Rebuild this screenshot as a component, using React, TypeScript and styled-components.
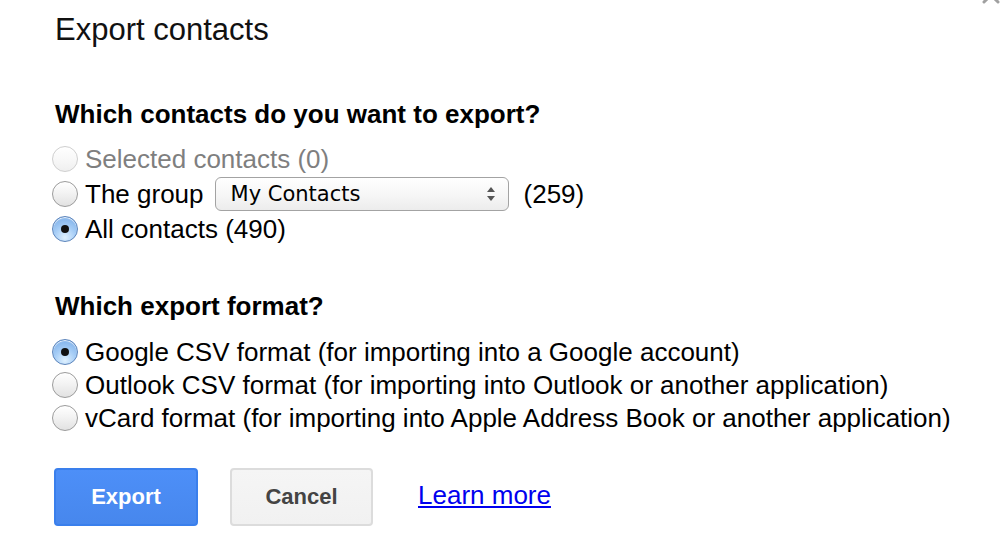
import React from "react";
import styled, { createGlobalStyle, css } from "styled-components";

const GlobalStyle = createGlobalStyle`
  html, body {
    margin: 0;
    padding: 0;
    background: #ffffff;
  }
  body {
    font-family: "Liberation Sans", Arial, sans-serif;
    color: #000;
    overflow: hidden;
  }
`;

const Page = styled.div`
  position: relative;
  width: 1004px;
  height: 554px;
  padding-left: 55px;
  box-sizing: border-box;
  overflow: hidden;
`;

const CloseIcon = styled.svg`
  position: absolute;
  top: -14px;
  right: 4px;
`;

const Title = styled.h1`
  margin: 12px 0 0 0;
  font-size: 31px;
  line-height: 36px;
  font-weight: normal;
  color: #111;
`;

const Heading = styled.h2<{ $top: number; $bottom: number }>`
  margin: ${(p) => p.$top}px 0 ${(p) => p.$bottom}px 0;
  font-size: 26px;
  line-height: 30px;
  font-weight: bold;
  color: #000;
`;

const Options = styled.div`
  display: flex;
  flex-direction: column;
`;

const Row = styled.label<{ $disabled?: boolean; $h?: number }>`
  display: flex;
  align-items: center;
  height: ${(p) => p.$h ?? 34}px;
  font-size: 26px;
  line-height: 34px;
  color: ${(p) => (p.$disabled ? "#7f7f7f" : "#000")};
  white-space: nowrap;
`;

const Radio = styled.span<{ $checked?: boolean; $disabled?: boolean }>`
  position: relative;
  flex: none;
  width: 26px;
  height: 26px;
  margin-left: -3px;
  margin-right: 7px;
  border-radius: 50%;
  box-sizing: border-box;
  border: 1.5px solid #9b9b9b;
  background: linear-gradient(#ffffff 0%, #f3f3f3 45%, #e2e2e2 100%);
  box-shadow: inset 0 1px 1px rgba(255, 255, 255, 0.9);
  ${(p) =>
    p.$disabled &&
    css`
      border-color: #cfcfcf;
      background: linear-gradient(#ffffff 0%, #f8f8f8 50%, #efefef 100%);
    `}
  ${(p) =>
    p.$checked &&
    css`
      border-color: #5b84bb;
      background: radial-gradient(
          circle at 50% 85%,
          #dff1ff 0%,
          #a6cdf6 45%,
          #75a9e6 100%
        );
      &::after {
        content: "";
        position: absolute;
        left: 50%;
        top: 50%;
        width: 8px;
        height: 8px;
        margin: -4px 0 0 -4px;
        border-radius: 50%;
        background: #111;
      }
    `}
`;

const SelectBox = styled.div`
  display: flex;
  align-items: center;
  justify-content: space-between;
  width: 294px;
  height: 34px;
  margin: 0 15px 0 11px;
  padding: 0 12px 0 15px;
  box-sizing: border-box;
  border: 1.5px solid #a3a3a3;
  border-radius: 6px;
  background: linear-gradient(#ffffff 0%, #f7f7f7 50%, #ececec 100%);
  font-family: "DejaVu Sans", "Liberation Sans", sans-serif;
  font-size: 21px;
  line-height: 30px;
  color: #000;
`;

const Count = styled.span`
  color: #000;
`;

const Actions = styled.div`
  display: flex;
  align-items: center;
  margin-top: 34px;
`;

const Button = styled.button<{ $primary?: boolean }>`
  width: 144px;
  height: 58px;
  margin-left: -1px;
  margin-right: 32px;
  box-sizing: border-box;
  border-radius: 4px;
  font-family: "Liberation Sans", Arial, sans-serif;
  font-size: 22px;
  font-weight: bold;
  cursor: pointer;
  ${(p) =>
    p.$primary
      ? css`
          border: 2px solid #3a7fec;
          background: linear-gradient(#4d8ff8, #4787ed);
          color: #fff;
        `
      : css`
          width: 143px;
          margin-left: 0;
          margin-right: 45px;
          border: 2px solid #dcdcdc;
          background: linear-gradient(#f5f5f5, #f1f1f1);
          color: #444;
        `}
`;

const Link = styled.a`
  font-size: 26px;
  color: #0000ee;
  text-decoration: underline;
  cursor: pointer;
  margin-top: -3px;
`;

export default function App() {
  return (
    <>
      <GlobalStyle />
      <Page>
        <CloseIcon width="18" height="18" viewBox="0 0 18 18">
          <path
            d="M2 2 L16 16 M16 2 L2 16"
            stroke="#a0a0a0"
            strokeWidth="3"
            strokeLinecap="round"
          />
        </CloseIcon>
        <Title>Export contacts</Title>

        <Heading $top={51} $bottom={13}>
          Which contacts do you want to export?
        </Heading>
        <Options>
          <Row $disabled>
            <Radio $disabled />
            Selected contacts (0)
          </Row>
          <Row $h={35}>
            <Radio />
            The group
            <SelectBox>
              <span>My Contacts</span>
              <svg width="10" height="16" viewBox="0 0 10 16">
                <path d="M5 1 L9 6 L1 6 Z" fill="#555" />
                <path d="M5 15 L9 10 L1 10 Z" fill="#555" />
              </svg>
            </SelectBox>
            <Count>(259)</Count>
          </Row>
          <Row $h={35}>
            <Radio $checked />
            All contacts (490)
          </Row>
        </Options>

        <Heading $top={45} $bottom={14}>
          Which export format?
        </Heading>
        <Options>
          <Row $h={33}>
            <Radio $checked />
            Google CSV format (for importing into a Google account)
          </Row>
          <Row $h={33}>
            <Radio />
            Outlook CSV format (for importing into Outlook or another
            application)
          </Row>
          <Row $h={33}>
            <Radio />
            vCard format (for importing into Apple Address Book or another
            application)
          </Row>
        </Options>

        <Actions>
          <Button $primary>Export</Button>
          <Button>Cancel</Button>
          <Link>Learn more</Link>
        </Actions>
      </Page>
    </>
  );
}
